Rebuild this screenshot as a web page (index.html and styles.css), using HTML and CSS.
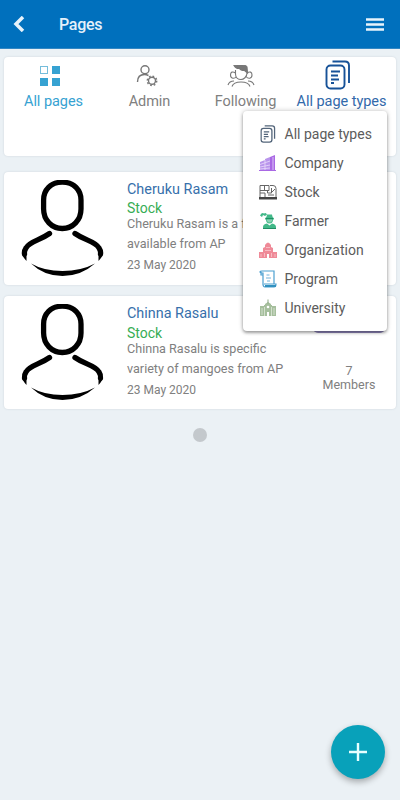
FILE: index.html
```html
<!DOCTYPE html>
<html lang="en">
<head>
<meta charset="utf-8">
<title>Pages</title>
<link rel="stylesheet" href="styles.css">
</head>
<body>
<svg class="defs" width="0" height="0">
  <symbol id="pages" viewBox="0 0 26 30">
    <path d="M7.500 1.500h12.500q4 0 4 4v17.500"/>
    <rect x="1.500" y="5.500" width="18" height="23" rx="4"/>
    <path d="M6 11.500h9M6 15.500h7M6 19.500h8M6 23h3"/>
  </symbol>
  <symbol id="person" viewBox="0 0 84 98">
    <path d="M41.300 2.200C53 2.200 60 10 60 20v9c0 11-8 19.500-18.700 19.500S22.600 40 22.600 29v-9C22.600 10 29.500 2.200 41.300 2.200Z" fill="none" stroke="#000" stroke-width="5.300"/>
    <path d="M28.500 53.500C18 61 9 61 5 68q-2 3-1.500 6M54 53.500C64.500 61 74 61 78 68q2 3 1.500 6" fill="none" stroke="#000" stroke-width="5.300" stroke-linecap="round"/>
    <path d="M.900 73Q1 76 5.500 81V72ZM82.100 73Q82 76 77.500 81V72Z"/>
    <path d="M10 83.500Q23 91 41.500 91T74 83.500Q60 96 41.500 96T10 83.500Z"/>
  </symbol>
</svg>
<header class="topbar">
  <svg class="back" viewBox="0 0 12 16"><path d="M10 1 3 8l7 7"/></svg>
  <h1>Pages</h1>
  <svg class="burger" viewBox="0 0 18 13"><path d="M0 1.500h18M0 6.500h18M0 11.500h18"/></svg>
</header>
<main>
  <nav class="card tabs">
    <a class="tab active">
      <span class="icon"><svg width="20" height="20" viewBox="0 0 20 20"><rect x=".5" y=".5" width="7" height="7" fill="none" stroke="#75bddb"/><path fill="#36a2d2" d="M12 0h8v8h-8zM0 12h8v8H0zM12 12h8v8h-8z"/></svg></span>
      <span class="label">All pages</span>
    </a>
    <a class="tab admin">
      <span class="icon"><svg width="22" height="22" viewBox="0 0 22 22" fill="none" stroke="#777" stroke-width="1.400"><circle cx="9" cy="4.700" r="4"/><path d="M1.500 17c0-5 3-7.500 7-7.500 2 0 3 .5 4 1"/><circle cx="16" cy="15.800" r="3.500"/><circle cx="16" cy="15.800" r="4.700" stroke-width="1.500" stroke-dasharray="1.700 1.991"/></svg></span>
      <span class="label">Admin</span>
    </a>
    <a class="tab">
      <span class="icon"><svg width="28" height="22" viewBox="0 0 28 22" fill="none" stroke="#777" stroke-width="1.100"><path fill="#777" d="M7 .500c5-1 12-1 13 1.500l.5 6-3-2.500q-4 0-5-2Q9 4 7 .500Z"/><path d="M8.500 5v4c0 4 3 5.500 5.500 5.500S20 12 20 8M8.500 8c-3-2-5-1-5 2 0 4 4 4 6 1.500M20 8c3-2 5-1 5 2 0 4-4 4-6 1.500M5 21.500c2-6 16-6 18 0M1 20c1-3 3-4 6-4M27 20c-1-3-3-4-6-4"/></svg></span>
      <span class="label">Following</span>
    </a>
    <a class="tab types">
      <span class="icon"><svg width="26" height="30"><use href="#pages"/></svg></span>
      <span class="label">All page types</span>
    </a>
  </nav>
  <article class="card entry">
    <svg class="avatar"><use href="#person"/></svg>
    <div class="info">
      <h2>Cheruku Rasam</h2>
      <p class="kind">Stock</p>
      <p class="text">Cheruku Rasam is a fruit<br>available from AP</p>
      <p class="date">23 May 2020</p>
    </div>
    <div class="side"></div>
  </article>
  <article class="card entry second">
    <svg class="avatar"><use href="#person"/></svg>
    <div class="info">
      <h2>Chinna Rasalu</h2>
      <p class="kind">Stock</p>
      <p class="text">Chinna Rasalu is specific<br>variety of mangoes from AP</p>
      <p class="date">23 May 2020</p>
    </div>
    <div class="side"><span class="pill"></span><span class="members">7<br>Members</span></div>
  </article>
  <span class="dot"></span>
</main>
<ul class="menu">
  <li class="m-pages"><svg viewBox="0 0 26 30"><use href="#pages"/></svg><span>All page types</span></li>
  <li class="m-company"><svg viewBox="0 0 18 18"><path fill="#b995ec" d="M1 8l5-2v11H1zM6 5l5-2v14H6z"/><path fill="#a968e4" d="M11 3l5-2v16h-5zM0 16h17v1H0z"/><path stroke="#eadafb" stroke-width=".8" d="M1 10.500 11 7M1 13l10-2M1 15l10-1M14 3v13M6 6v10"/></svg><span>Company</span></li>
  <li class="m-stock"><svg viewBox="0 0 18 18"><path fill="none" stroke="#666" d="M1 14V2.500h9v5H1M5.500 2v5M1 10h5v4M8.500 7v3h4V5M11 2.500h3q3 0 3 3V14M13 9l3-3M9 12h6"/><path fill="#444" d="M0 14h18v2.500H0z"/></svg><span>Stock</span></li>
  <li class="m-farmer"><svg viewBox="0 0 18 18"><path fill="#42b989" d="M1 3.500Q3 0 5 1.500q2-1.500 3 1L6 4 4 3 3 5ZM6 6q1.500 0 2-3.500h5Q13.500 6 15 6v1.500h-1q0 4-3.500 4T7 7.500H6ZM4 17v-2q0-3 4-3.500l2.500 2 2.500-2q4 .5 4 3.500v2Z"/><path fill="#8bd2b3" d="M8 7.500h5v1.500q-2.500 3-5 0z"/><path stroke="#218d64" d="M7 6.500h7M4 16.500h13"/></svg><span>Farmer</span></li>
  <li class="m-org"><svg viewBox="0 0 18 18"><path fill="#ef8a98" d="M0 11h4V7l2-1V4q3-5 6 0v2l2 1v4h4v6H0z"/><path stroke="#fbd0d6" stroke-width=".7" d="M7 6.500h4M6 9.500h6M2 13v3M16 13v3M5.500 12v4M12.500 12v4"/><path fill="#fff" d="M8 13h2v4H8z"/></svg><span>Organization</span></li>
  <li class="m-program"><svg viewBox="0 0 18 18" fill="none" stroke="#4b9fd0"><path stroke-width="1.200" d="M4 15V3q-3 0-3-1t2-1h12v13M4 5H2V2M5 14h12q0 3-2 3H6q-2 0-2-3"/><path stroke-width=".8" d="M7.500 5h3M7 8h5M8 11h3"/><path stroke-width="2" stroke="#3191c0" d="M6 16h11"/></svg><span>Program</span></li>
  <li class="m-uni"><svg viewBox="0 0 18 18"><path fill="#a6bf9d" d="M1 7h4V6h1V5l3-2 3 2v1h1v1h4v10H1z"/><path stroke="#dfe9da" stroke-width=".8" d="M3 9v7M5.500 8v9M12.500 8v9M15 9v7"/><path fill="#fff" d="M8 13h2v4H8z"/><circle cx="9" cy="8" r="1.300" fill="#fff"/><path stroke="#8ba783" d="M9 .500v4"/></svg><span>University</span></li>
</ul>
<button class="fab" aria-label="Add"><svg viewBox="0 0 18 18"><path d="M9 0v18M0 9h18"/></svg></button>
</body>
</html>
```

FILE: styles.css
```css
* { box-sizing: border-box; }
body { margin: 0; height: 800px; overflow: hidden; background: #ebf1f5; font-family: Roboto, sans-serif; color: #808080; }
h1, h2, p, ul { margin: 0; padding: 0; font-weight: 400; }
.defs { position: absolute; }
.topbar { height: 49px; background: #0070bd; border-bottom: 1px solid #3287c4; display: flex; align-items: center; padding: 0 16px 0 13px; }
.topbar svg { fill: none; stroke: #e7f3fb; }
.back { width: 12px; height: 16px; stroke-width: 3.5; }
.topbar h1 { flex: 1; margin-left: 34px; font-size: 16px; font-weight: 500; letter-spacing: -.3px; color: #e5f1fa; }
.burger { width: 18px; height: 13px; stroke-width: 2.4; }
main { padding: 8px 4px 0; display: flex; flex-direction: column; }
.card { background: #fff; border-radius: 4px; box-shadow: 0 0 2px rgba(80, 100, 120, .22); }
.tabs { height: 99px; display: grid; grid-template-columns: repeat(4, 96px); padding: 3px 0 0 1.5px; }
.tab { display: flex; flex-direction: column; align-items: center; }
.icon { height: 31px; display: flex; align-items: center; }
.label { font-size: 14.5px; line-height: 18px; margin-top: 1.5px; letter-spacing: -.05px; white-space: nowrap; }
.active { color: #36a2d2; }
.active .icon { margin-left: -8px; }
.admin .icon { margin-left: -6px; }
.tab:nth-child(3) .icon { margin-left: -9px; }
.types { color: #3269aa; }
.types .icon { margin-left: -8px; margin-top: -1px; margin-bottom: 1px; fill: none; stroke: #175298; stroke-width: 1.9; }
.entry { height: 113px; margin-top: 16px; display: flex; padding: 8px 0 0 17px; }
.second { margin-top: 11px; }
.avatar { width: 84px; height: 98px; flex: none; }
.info { width: 180px; flex: none; margin-left: 22px; white-space: nowrap; }
.info h2 { font-size: 14.4px; line-height: 20px; color: #3770ab; }
.kind { font-size: 14px; line-height: 17px; color: #38ad55; }
.text { font-size: 12.6px; line-height: 19.5px; margin-top: -3px; }
.date { font-size: 12px; line-height: 18px; margin-top: 3px; }
.second .kind { margin-top: 1px; }
.side { width: 76px; flex: none; margin-left: 4px; display: flex; flex-direction: column; align-items: center; font-size: 12.5px; line-height: 13.5px; text-align: center; }
.pill { width: 72px; height: 18px; margin-top: 11px; background: #9188bd; border-radius: 5px; }
.members { margin-top: 31px; }
.dot { width: 14px; height: 14px; border-radius: 50%; background: #c3c8cc; align-self: center; margin-top: 19px; }
.menu { position: absolute; left: 243px; top: 111px; width: 144px; height: 220px; padding: 8px 16px; background: #fff; border-radius: 4px; list-style: none; box-shadow: 0 2px 3px rgba(0, 0, 0, .3), 0 0 5px rgba(0, 0, 0, .24); color: #5c5c5c; }
.menu li { height: 29.15px; display: flex; align-items: center; gap: 7.5px; font-size: 14px; white-space: nowrap; }
.menu svg { width: 18px; height: 18px; flex: none; }
.m-pages svg { fill: none; stroke: #53657a; stroke-width: 2.2; }
.fab { position: absolute; left: 331px; top: 725px; width: 54px; height: 54px; border: 0; border-radius: 50%; background: #08a1ba; box-shadow: 0 3px 6px rgba(0, 0, 0, .3); display: flex; align-items: center; justify-content: center; padding: 0; }
.fab svg { width: 18px; height: 18px; stroke: #e7ffff; stroke-width: 2.4; }
```
